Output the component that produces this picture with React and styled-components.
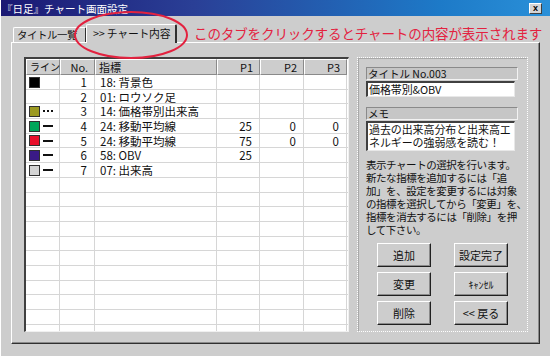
import React from 'react';
import styled, { createGlobalStyle } from 'styled-components';

const GlobalStyle = createGlobalStyle`
    html, body {
        margin: 0;
        padding: 0;
        background: #cdcdcd;
    }
    body {
        font-family: "Noto Sans CJK JP", "Liberation Sans", sans-serif;
    }
`

const JP = `"Noto Sans CJK JP", "Liberation Sans", sans-serif`

const Window = styled.div`
    position: relative;
    width: 550px;
    height: 356px;
    overflow: hidden;
    background: #cdcdcd;
    border-left: 1px solid #ffffff;
    box-sizing: border-box;
    display: flex;
    flex-direction: column;
`
const TitleBar = styled.div`
    height: 16px;
    flex: none;
    display: flex;
    align-items: center;
    justify-content: space-between;
    padding: 0 8px 0 1px;
    background: linear-gradient(to right, #1a1873 0%, #2a3f96 35%, #1d7ac8 80%, #2a90d8 100%);
    color: #ffffff;
    font-family: ${JP};
    font-size: 10.5px;
    white-space: nowrap;
`
const CloseBox = styled.div`
    width: 13px;
    height: 11px;
    box-sizing: border-box;
    background: #d4d4d4;
    border-top: 1px solid #ffffff;
    border-left: 1px solid #ffffff;
    border-right: 1px solid #404040;
    border-bottom: 1px solid #404040;
    color: #000;
    font-family: "Liberation Sans", sans-serif;
    font-size: 9px;
    font-weight: bold;
    line-height: 9px;
    text-align: center;
`
const Body = styled.div`
    flex: 1;
    display: flex;
    flex-direction: column;
    padding: 5px 10px 0 10px;
`
const TabStrip = styled.div`
    display: flex;
    align-items: flex-end;
    height: 21px;
    padding-left: 2px;
`
const Tab = styled.div`
    flex: none;
    width: ${p => p.$w}px;
    white-space: nowrap;
    height: ${p => (p.$active ? '19px' : '15px')};
    box-sizing: border-box;
    padding-left: ${p => (p.$active ? '6px' : '3px')};
    margin-left: ${p => (p.$active ? '-1px' : '0')};
    background: #cdcdcd;
    border-top: 1px solid #ffffff;
    border-left: 1px solid #ffffff;
    border-right: 2px solid #303030;
    border-radius: 2px 2px 0 0;
    font-family: ${JP};
    font-size: ${p => (p.$active ? '10.8px' : '10.4px')};
    letter-spacing: ${p => (p.$active ? '-0.2px' : '-0.4px')};
    line-height: ${p => (p.$active ? '17px' : '14px')};
    color: #111;
    position: relative;
    z-index: ${p => (p.$active ? 2 : 1)};
    margin-bottom: ${p => (p.$active ? '-1px' : '0')};
`
const Note = styled.div`
    margin-left: 17px;
    align-self: center;
    margin-top: 2px;
    font-family: ${JP};
    font-size: 13.5px;
    color: #e3223f;
    white-space: nowrap;
    letter-spacing: -0.1px;
`
const Ring = styled.svg`
    position: absolute;
    left: 72px;
    top: 10px;
    pointer-events: none;
    z-index: 5;
`
const Panel = styled.div`
    width: 529px;
    height: 302px;
    box-sizing: border-box;
    display: flex;
    gap: 8px;
    padding: 14px 9px 11px 12px;
    border-top: 1px solid #ffffff;
    border-left: 1px solid #ffffff;
    border-right: 1px solid #303030;
    border-bottom: 1px solid #303030;
    box-shadow: inset -1px -1px 0 #8a8a8a;
`
const Grid = styled.div`
    width: 325px;
    flex: none;
    box-sizing: border-box;
    background: #ffffff;
    border-top: 2px solid #404040;
    border-left: 2px solid #404040;
    border-right: 1px solid #f0f0f0;
    border-bottom: 1px solid #f0f0f0;
    overflow: hidden;
    font-family: ${JP};
    font-size: 11.5px;
    color: #111;
`
const Row = styled.div`
    display: grid;
    grid-template-columns: 34px 35px 122px 43px 44px 43px;
    height: ${p => (p.$head ? '16px' : '14.7px')};
    box-sizing: border-box;
    border-bottom: ${p => (p.$head ? 'none' : '1px solid #d6d6d6')};
`
const HeadCell = styled.div`
    background: #cdcdcd;
    box-sizing: border-box;
    border-top: 1px solid #ffffff;
    border-left: 1px solid #ffffff;
    border-right: 1px solid #8a8a8a;
    border-bottom: 1px solid #8a8a8a;
    padding: 0 ${p => (p.$right ? '6px' : '3px')} 0 3px;
    text-align: ${p => (p.$right ? 'right' : 'left')};
    font-size: ${p => (p.$small ? '10px' : '11px')};
    line-height: 14px;
    white-space: nowrap;
`
const Cell = styled.div`
    box-sizing: border-box;
    border-right: 1px solid #d6d6d6;
    padding: 0 ${p => (p.$right ? '7px' : '4px')} 0 5px;
    line-height: 14px;
    white-space: nowrap;
    display: flex;
    align-items: center;
    justify-content: ${p => (p.$right ? 'flex-end' : 'flex-start')};
    gap: 3px;
`
const Swatch = styled.span`
    width: 11px;
    height: 11px;
    box-sizing: border-box;
    background: ${p => p.$color};
    border: 1px solid #303030;
    flex: none;
    margin-left: -2px;
`
const Stroke = styled.span`
    width: 10px;
    height: 2px;
    flex: none;
    background: ${p => (p.$dotted ? 'repeating-linear-gradient(to right, #111 0 2px, transparent 2px 4px)' : '#111')};
`
const Side = styled.div`
    width: 171px;
    flex: none;
    box-sizing: border-box;
    border: 1px dotted #ffffff;
    box-shadow: inset 1px 1px 0 #a8a8a8;
    padding: 9px 6px 0 8px;
    display: flex;
    flex-direction: column;
    font-family: ${JP};
    color: #111;
`
const Caption = styled.div`
    height: 13px;
    box-sizing: border-box;
    border-top: 1px solid #8a8a8a;
    border-left: 1px solid #8a8a8a;
    border-right: 1px solid #f2f2f2;
    border-bottom: 1px solid #f2f2f2;
    background: #c6c6c6;
    font-size: 10.5px;
    line-height: 11px;
    padding-left: 1px;
    white-space: nowrap;
    margin-right: 3px;
    margin-top: ${p => (p.$gap ? '10px' : '0')};
`
const Field = styled.div`
    margin-top: 1px;
    margin-right: 6px;
    height: ${p => (p.$lines ? '30px' : '16px')};
    box-sizing: border-box;
    background: #ffffff;
    border-top: 2px solid #404040;
    border-left: 2px solid #404040;
    border-right: 1px solid #e8e8e8;
    border-bottom: 1px solid #e8e8e8;
    font-size: 11px;
    line-height: 13px;
    padding: 0 1px;
    white-space: pre;
    overflow: hidden;
    letter-spacing: -0.1px;
`
const Help = styled.div`
    margin-top: 7px;
    font-size: 10.5px;
    line-height: 13px;
    white-space: pre;
    letter-spacing: -0.45px;
`
const Buttons = styled.div`
    margin-top: 7px;
    display: grid;
    grid-template-columns: 54px 54px;
    grid-auto-rows: 24px;
    column-gap: 23px;
    row-gap: 5px;
    padding-left: 11px;
`
const Button = styled.div`
    box-sizing: border-box;
    background: #cdcdcd;
    border-top: 1px solid #ffffff;
    border-left: 1px solid #ffffff;
    border-right: 1px solid #202020;
    border-bottom: 1px solid #202020;
    box-shadow: inset -1px -1px 0 #8a8a8a;
    display: flex;
    align-items: center;
    justify-content: center;
    font-size: ${p => (p.$small ? '10px' : '11px')};
    color: #111;
    white-space: nowrap;
`

const rows = [
    { color: '#000000', mark: null, no: 1, name: '18: 背景色' },
    { color: null, mark: null, no: 2, name: '01: ロウソク足' },
    { color: '#9c9a22', mark: 'dot', no: 3, name: '14: 価格帯別出来高' },
    { color: '#00a65a', mark: 'line', no: 4, name: '24: 移動平均線', p1: '25', p2: '0', p3: '0' },
    { color: '#e8102c', mark: 'line', no: 5, name: '24: 移動平均線', p1: '75', p2: '0', p3: '0' },
    { color: '#3a1a86', mark: 'line', no: 6, name: '58: OBV', p1: '25' },
    { color: '#d4d4d4', mark: 'line', no: 7, name: '07: 出来高' },
]

const App = () => {
    const blanks = Array.from({ length: 12 })
    return (
        <>
            <GlobalStyle />
            <Window>
                <TitleBar>
                    <span>『日足』チャート画面設定</span>
                    <CloseBox>x</CloseBox>
                </TitleBar>
                <Body>
                    <TabStrip>
                        <Tab $w={74}>タイトル一覧</Tab>
                        <Tab $w={91} $active>&gt;&gt; チャート内容</Tab>
                        <Note>このタブをクリックするとチャートの内容が表示されます</Note>
                    </TabStrip>
                    <Panel>
                        <Grid>
                            <Row $head>
                                <HeadCell $small>ライン</HeadCell>
                                <HeadCell $right>No.</HeadCell>
                                <HeadCell>指標</HeadCell>
                                <HeadCell $right>P1</HeadCell>
                                <HeadCell $right>P2</HeadCell>
                                <HeadCell $right>P3</HeadCell>
                            </Row>
                            {rows.map(r => (
                                <Row key={r.no}>
                                    <Cell>
                                        {r.color && <Swatch $color={r.color} />}
                                        {r.mark && <Stroke $dotted={r.mark === 'dot'} />}
                                    </Cell>
                                    <Cell $right>{r.no}</Cell>
                                    <Cell>{r.name}</Cell>
                                    <Cell $right>{r.p1}</Cell>
                                    <Cell $right>{r.p2}</Cell>
                                    <Cell $right>{r.p3}</Cell>
                                </Row>
                            ))}
                            {blanks.map((_, i) => (
                                <Row key={'b' + i}>
                                    <Cell /><Cell /><Cell /><Cell /><Cell /><Cell />
                                </Row>
                            ))}
                        </Grid>
                        <Side>
                            <Caption>タイトル No.003</Caption>
                            <Field>価格帯別&amp;OBV</Field>
                            <Caption $gap>メモ</Caption>
                            <Field $lines>{'過去の出来高分布と出来高エ\nネルギーの強弱感を読む！'}</Field>
                            <Help>{'表示チャートの選択を行います。\n新たな指標を追加するには「追\n加」を、設定を変更するには対象\nの指標を選択してから「変更」を、\n指標を消去するには「削除」を押\nして下さい。'}</Help>
                            <Buttons>
                                <Button>追加</Button>
                                <Button>設定完了</Button>
                                <Button>変更</Button>
                                <Button $small>ｷｬﾝｾﾙ</Button>
                                <Button>削除</Button>
                                <Button>&lt;&lt; 戻る</Button>
                            </Buttons>
                        </Side>
                    </Panel>
                </Body>
                <Ring width="116" height="50" viewBox="0 0 116 50">
                    <ellipse cx="58" cy="25" rx="56" ry="23" fill="none" stroke="#e3223f" strokeWidth="2" />
                </Ring>
            </Window>
        </>
    );
};

export default App;
